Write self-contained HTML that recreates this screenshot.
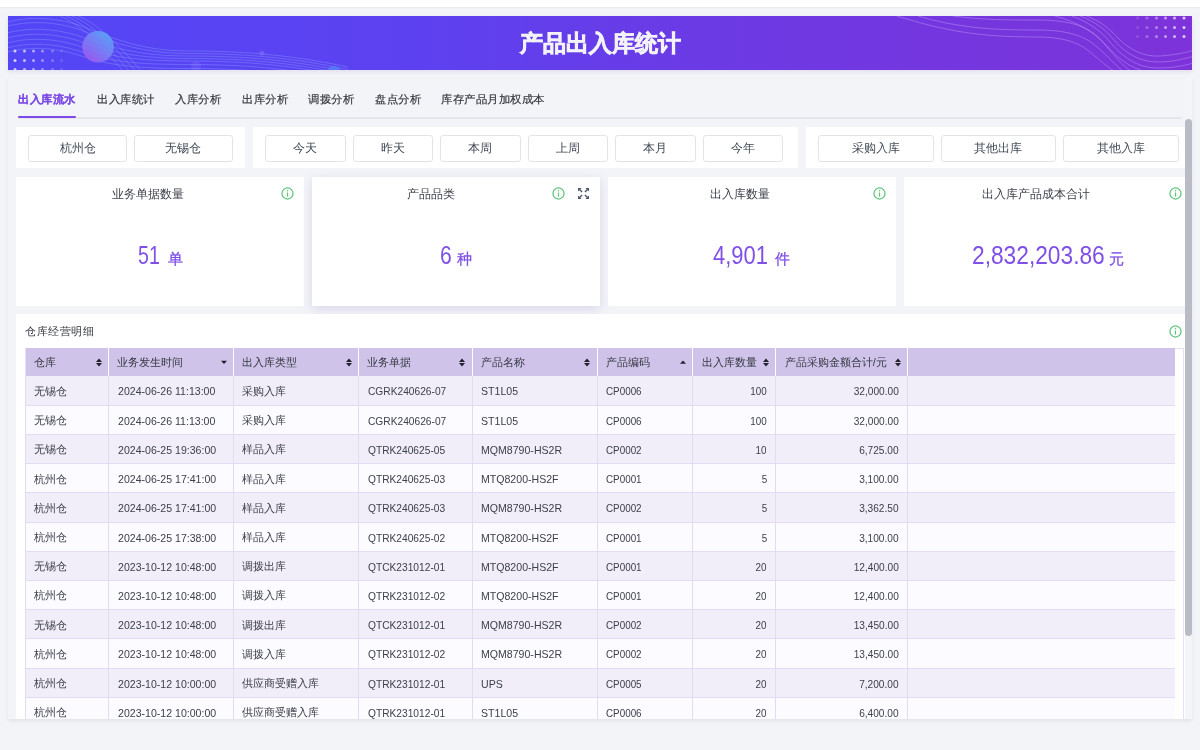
<!DOCTYPE html>
<html><head><meta charset="utf-8">
<style>
*{box-sizing:border-box;margin:0;padding:0}
html,body{width:1200px;height:750px;overflow:hidden}
body{background:#f3f4f8;font-family:"Liberation Sans",sans-serif;position:relative;color:#333}
#root{position:absolute;left:0;top:0;width:1200px;height:750px;will-change:transform}
.abs{position:absolute}
#topbar{left:0;top:0;width:1200px;height:6.7px;background:#fff;box-shadow:0 1px 1.5px rgba(0,0,0,0.045)}
#banner{left:8px;top:16px;width:1184px;height:54px;background:linear-gradient(90deg,#5346f6 0%,#5d41f0 35%,#6c3ae4 60%,#7d33d9 100%);overflow:hidden;box-shadow:0 2px 4px rgba(80,50,160,0.10)}
#banner .title{position:absolute;left:0;top:-0.3px;width:100%;height:54px;line-height:54px;text-align:center;color:#f2f2f7;font-size:23px;font-weight:bold;letter-spacing:0px;-webkit-text-stroke:0.7px #f2f2f7}
#container{left:8px;top:78px;width:1184px;height:640.7px;background:#f3f4f8;box-shadow:0 1.5px 4px rgba(0,0,0,0.07);overflow:hidden}
.tab{position:absolute;top:93.8px;font-size:12px;letter-spacing:0px;line-height:12px;transform:scale(0.962,0.93);transform-origin:0 0;color:#34373e;white-space:nowrap;-webkit-text-stroke:0.2px #34373e}
.tab.active{color:#7b4ae5;font-weight:bold;-webkit-text-stroke:0.1px #7b4ae5}
#tabline{left:18px;top:117px;width:1164px;height:2px;background:#e5e6eb}
#tabul{left:18px;top:115.8px;width:58px;height:2px;background:#7d4ae8;border-radius:1px}
.box{position:absolute;top:126.5px;height:41.5px;background:#fff}
.btn{position:absolute;top:135.2px;height:26.4px;border:1px solid #e4e4e8;border-radius:3px;background:#fff;font-size:12px;line-height:25.8px;text-align:center;color:#404854}
.card{position:absolute;top:176.7px;height:129.2px;width:288px;background:#fff}
.card .ct{position:absolute;top:11.5px;left:0;font-size:12px;line-height:12px;color:#3a3e47;text-align:center}
.num{position:absolute;top:0;color:#7f50e7;font-size:25.1px;line-height:25px;white-space:nowrap;transform-origin:0 0}
.unit{position:absolute;top:0;color:#7f50e7;font-size:15px;-webkit-text-stroke:0.3px #7f50e7;line-height:15px;white-space:nowrap}
#track{left:1184.5px;top:78px;width:7.5px;height:640.7px;background:#f4f5f8}
#scroll{left:1184.5px;top:118.7px;width:7.5px;height:517.3px;background:#b9bcc4;border-radius:4px}
#tclip{left:8px;top:78px;width:1184px;height:640.7px;overflow:hidden}
#tcard{left:8px;top:236.3px;width:1176px;height:420px;background:#fff}
#tcard .tt{position:absolute;left:9px;top:10.6px;font-size:11px;letter-spacing:0.6px;line-height:12px;color:#33363d}
#twrap{left:17px;top:269.7px;width:1159px;height:400px;border:1px solid #e6dff5}
#tbl{left:17px;top:270px;border-collapse:collapse;table-layout:fixed;width:1150px;font-size:11px;color:#3d414a}
th{background:#cfc3e9;height:28px;font-weight:normal;text-align:left;padding:1px 9px 0 8.2px;color:#353842;border-right:1.5px solid #fff;position:relative;white-space:nowrap}
td{height:29.22px;padding:1.6px 9px 0 8.2px;border-right:1px solid #e3daf4;border-bottom:1px solid #e3daf4;white-space:nowrap;overflow:hidden}
td.l{font-size:11.2px;padding-left:8.3px}
.t{display:inline-block;transform-origin:0 50%}
td.r .t{transform-origin:100% 50%}
td:first-child{border-left:1px solid #e3daf4}
td:last-child{border-right:none}
th:last-child{border-right:none}
tr.s td{background:#f1edf9}
tr.w td{background:#fcfbff}
td.r{text-align:right;padding-right:8.7px}
.sort{position:absolute;right:6.5px;top:9.5px;width:6px;height:9px}
</style></head><body>
<div id="root"><div id="topbar" class="abs"></div>
<div id="banner" class="abs">
<svg width="1184" height="54" style="position:absolute;left:0;top:0" viewBox="0 0 1184 54">
<defs><linearGradient id="ball" x1="0.85" y1="0.1" x2="0.2" y2="0.9"><stop offset="0" stop-color="#58a8f8"/><stop offset="1" stop-color="#9d5cf0"/></linearGradient>
<linearGradient id="semi" x1="0" y1="0" x2="0" y2="1"><stop offset="0" stop-color="#4f8cf5"/><stop offset="1" stop-color="#5a60f0"/></linearGradient></defs>

<g fill="none" stroke="#8ea2ff" stroke-opacity="0.42" stroke-width="0.9">
<path d="M0 5.8 C20 0.8 45 0.8 70 8.8 C100 19.8 130 35 180 35 C230 35 280 38 340 51"/>
<path d="M0 10 C20 5.0 45 5.0 70 13.0 C100 24.0 130 37.5 180 37.5 C230 37.5 280 40.5 340 53.5"/>
<path d="M0 16.7 C20 11.7 45 11.7 70 19.7 C100 30.7 130 40 180 40 C230 40 280 43 340 56"/>
<path d="M0 21.7 C20 16.7 45 16.7 70 24.7 C100 35.7 130 42.5 180 42.5 C230 42.5 280 45.5 340 58.5"/>
<path d="M0 26.7 C20 21.7 45 21.7 70 29.7 C100 40.7 130 45 180 45 C230 45 280 48 340 61"/>
<path d="M0 31.7 C20 26.7 45 26.7 70 34.7 C100 45.7 130 48.5 180 48.5 C230 48.5 280 51.5 340 64.5"/>
<path d="M0 35.8 C20 30.8 45 30.8 70 38.8 C100 49.8 130 52.5 180 52.5 C230 52.5 280 55.5 340 68.5"/>
<path d="M52 0 C72 8 92 28 116 56"/>
<path d="M58 0 C78 8 98 28 122 56"/>
<path d="M64 0 C84 8 104 28 128 56"/>
<path d="M70 0 C90 8 110 28 134 56"/>
</g>
<g fill="none" stroke="#c8a8ff" stroke-opacity="0.45" stroke-width="0.9">
<path d="M889 0 C940 16 975 21 1028 21 C1055 21 1070 26 1082 36 C1092 44 1100 52 1108 56"/>
<path d="M910 0 C950 12 985 14 1028 14 C1058 14 1075 19 1088 30 C1100 40 1108 50 1116 56"/>
<path d="M945 0 C975 4 1000 4 1028 4 C1062 4 1080 10 1093 24 C1104 36 1112 48 1124 56"/>
<path d="M1046.7 0 C1070 6 1085 16 1097 28 C1108 40 1120 52 1140 56"/>
<path d="M1064 0 C1080 6 1092 14 1102 26 C1114 40 1128 52 1150 52 C1165 52 1175 50 1186 46.8"/>
<path d="M1072 0 C1088 6 1098 14 1106 24 C1118 38 1132 46 1150 46 C1165 46 1175 43 1186 40.2"/>
<path d="M1078.7 0 C1094 6 1103 14 1111 23 C1122 34 1136 41 1152 40 C1166 39 1176 37 1186 34.2"/>
</g>
<circle cx="90" cy="30.8" r="15.8" fill="url(#ball)" opacity="0.9"/>
<circle cx="188" cy="50" r="5" fill="#ffffff" opacity="0.08"/>
<circle cx="254" cy="37" r="2.6" fill="#ffffff" opacity="0.12"/>
<circle cx="326" cy="58" r="8" fill="url(#semi)" opacity="0.7"/>
<g fill="#ffffff">
<circle cx="7" cy="35" r="1.5" opacity="0.75"/><circle cx="16.5" cy="35" r="1.5" opacity="0.65"/><circle cx="25.5" cy="35" r="1.5" opacity="0.55"/><circle cx="34.5" cy="35" r="1.5" opacity="0.42"/><circle cx="44.5" cy="35" r="1.5" opacity="0.28"/><circle cx="53.5" cy="35" r="1.5" opacity="0.14"/><circle cx="7" cy="44.5" r="1.5" opacity="0.75"/><circle cx="16.5" cy="44.5" r="1.5" opacity="0.65"/><circle cx="25.5" cy="44.5" r="1.5" opacity="0.55"/><circle cx="34.5" cy="44.5" r="1.5" opacity="0.42"/><circle cx="44.5" cy="44.5" r="1.5" opacity="0.28"/><circle cx="53.5" cy="44.5" r="1.5" opacity="0.14"/><circle cx="7" cy="53.5" r="1.5" opacity="0.75"/><circle cx="16.5" cy="53.5" r="1.5" opacity="0.65"/><circle cx="25.5" cy="53.5" r="1.5" opacity="0.55"/><circle cx="34.5" cy="53.5" r="1.5" opacity="0.42"/><circle cx="44.5" cy="53.5" r="1.5" opacity="0.28"/><circle cx="53.5" cy="53.5" r="1.5" opacity="0.14"/>
<circle cx="1129.5" cy="2" r="1.5" opacity="0.14"/><circle cx="1139" cy="2" r="1.5" opacity="0.28"/><circle cx="1148.5" cy="2" r="1.5" opacity="0.42"/><circle cx="1157.5" cy="2" r="1.5" opacity="0.55"/><circle cx="1166.5" cy="2" r="1.5" opacity="0.65"/><circle cx="1176" cy="2" r="1.5" opacity="0.75"/><circle cx="1129.5" cy="11.5" r="1.5" opacity="0.14"/><circle cx="1139" cy="11.5" r="1.5" opacity="0.28"/><circle cx="1148.5" cy="11.5" r="1.5" opacity="0.42"/><circle cx="1157.5" cy="11.5" r="1.5" opacity="0.55"/><circle cx="1166.5" cy="11.5" r="1.5" opacity="0.65"/><circle cx="1176" cy="11.5" r="1.5" opacity="0.75"/><circle cx="1129.5" cy="20.5" r="1.5" opacity="0.14"/><circle cx="1139" cy="20.5" r="1.5" opacity="0.28"/><circle cx="1148.5" cy="20.5" r="1.5" opacity="0.42"/><circle cx="1157.5" cy="20.5" r="1.5" opacity="0.55"/><circle cx="1166.5" cy="20.5" r="1.5" opacity="0.65"/><circle cx="1176" cy="20.5" r="1.5" opacity="0.75"/>
</g>
</svg>
<div class="title">产品出入库统计</div>
</div>

<div id="container" class="abs"></div>
<div class="tab active" style="left:18px">出入库流水</div>
<div class="tab" style="left:97px">出入库统计</div>
<div class="tab" style="left:175px">入库分析</div>
<div class="tab" style="left:241.5px">出库分析</div>
<div class="tab" style="left:308px">调拨分析</div>
<div class="tab" style="left:375px">盘点分析</div>
<div class="tab" style="left:441px">库存产品月加权成本</div>
<div id="tabline" class="abs"></div><div id="tabul" class="abs"></div>
<div class="box" style="left:16px;width:229px"></div>
<div class="box" style="left:253px;width:545px"></div>
<div class="box" style="left:806px;width:386px"></div>
<div class="btn" style="left:28px;width:99px">杭州仓</div>
<div class="btn" style="left:134px;width:98.5px">无锡仓</div>
<div class="btn" style="left:265px;width:80.5px">今天</div>
<div class="btn" style="left:352.5px;width:80.5px">昨天</div>
<div class="btn" style="left:440px;width:80.5px">本周</div>
<div class="btn" style="left:527.5px;width:80.5px">上周</div>
<div class="btn" style="left:615px;width:80.5px">本月</div>
<div class="btn" style="left:702.5px;width:80.5px">今年</div>
<div class="btn" style="left:818px;width:115.5px">采购入库</div>
<div class="btn" style="left:940.5px;width:115.5px">其他出库</div>
<div class="btn" style="left:1063px;width:115.5px">其他入库</div>
<div class="card" style="left:16px"><div class="ct" style="width:264px">业务单据数量</div></div>
<div class="card" style="left:312px;box-shadow:0 3px 10px rgba(90,70,160,0.16)"><div class="ct" style="width:238px">产品品类</div></div>
<div class="card" style="left:608px"><div class="ct" style="width:264px">出入库数量</div></div>
<div class="card" style="left:904px"><div class="ct" style="width:264px">出入库产品成本合计</div></div>
<div class="num" style="left:137.75px;top:243px;transform:scaleX(0.78)">51</div>
<div class="num" style="left:439.9px;top:243px;transform:scaleX(0.84)">6</div>
<div class="num" style="left:712.5px;top:243px;transform:scaleX(0.876)">4,901</div>
<div class="num" style="left:971.7px;top:243px;transform:scaleX(0.906)">2,832,203.86</div>
<div class="unit" style="left:167.75px;top:250.5px">单</div>
<div class="unit" style="left:457.3px;top:250.5px">种</div>
<div class="unit" style="left:775.3px;top:250.5px">件</div>
<div class="unit" style="left:1109.3px;top:250.5px">元</div>
<svg class="abs" style="left:280.7px;top:186.9px" width="13" height="13" viewBox="0 0 13 13"><circle cx="6.5" cy="6.5" r="5.55" fill="none" stroke="#5cc47c" stroke-width="1.25"/><circle cx="6.5" cy="3.75" r="0.8" fill="#5cc47c"/><rect x="5.9" y="5.5" width="1.2" height="4.1" fill="#5cc47c"/></svg>
<svg class="abs" style="left:551.8px;top:186.9px" width="13" height="13" viewBox="0 0 13 13"><circle cx="6.5" cy="6.5" r="5.55" fill="none" stroke="#5cc47c" stroke-width="1.25"/><circle cx="6.5" cy="3.75" r="0.8" fill="#5cc47c"/><rect x="5.9" y="5.5" width="1.2" height="4.1" fill="#5cc47c"/></svg>
<svg class="abs" style="left:872.7px;top:186.9px" width="13" height="13" viewBox="0 0 13 13"><circle cx="6.5" cy="6.5" r="5.55" fill="none" stroke="#5cc47c" stroke-width="1.25"/><circle cx="6.5" cy="3.75" r="0.8" fill="#5cc47c"/><rect x="5.9" y="5.5" width="1.2" height="4.1" fill="#5cc47c"/></svg>
<svg class="abs" style="left:1168.7px;top:186.9px" width="13" height="13" viewBox="0 0 13 13"><circle cx="6.5" cy="6.5" r="5.55" fill="none" stroke="#5cc47c" stroke-width="1.25"/><circle cx="6.5" cy="3.75" r="0.8" fill="#5cc47c"/><rect x="5.9" y="5.5" width="1.2" height="4.1" fill="#5cc47c"/></svg>
<svg class="abs" style="left:577.9px;top:188.0px" width="11" height="11" viewBox="0 0 11 11"><g fill="#50566a"><path d="M0 0H3.6L0 3.6Z"/><path d="M11 0H7.4L11 3.6Z"/><path d="M0 11H3.6L0 7.4Z"/><path d="M11 11H7.4L11 7.4Z"/></g><g stroke="#50566a" stroke-width="1.35"><path d="M1.3 1.3L4.1 4.1M9.7 1.3L6.9 4.1M1.3 9.7L4.1 6.9M9.7 9.7L6.9 6.9"/></g></svg>
<div id="tclip" class="abs">
<div id="tcard" class="abs"><div class="tt">仓库经营明细</div></div>
<div id="twrap" class="abs"></div>
<table id="tbl" class="abs"><colgroup>
<col style="width:83.25px">
<col style="width:125.0px">
<col style="width:125.05px">
<col style="width:113.4px">
<col style="width:125.0px">
<col style="width:95.8px">
<col style="width:83.0px">
<col style="width:131.7px">
<col style="width:267.8px">
</colgroup><thead><tr>
<th>仓库<svg class="sort" viewBox="0 0 6 9"><path d="M0 3.9 L3 0.4 L6 3.9Z M0 5.1 L3 8.6 L6 5.1Z" fill="#22222e"/></svg></th>
<th>业务发生时间<svg class="sort" viewBox="0 0 6 9"><path d="M0 2.7 L3 6 L6 2.7Z" fill="#22222e"/></svg></th>
<th>出入库类型<svg class="sort" viewBox="0 0 6 9"><path d="M0 3.9 L3 0.4 L6 3.9Z M0 5.1 L3 8.6 L6 5.1Z" fill="#22222e"/></svg></th>
<th>业务单据<svg class="sort" viewBox="0 0 6 9"><path d="M0 3.9 L3 0.4 L6 3.9Z M0 5.1 L3 8.6 L6 5.1Z" fill="#22222e"/></svg></th>
<th>产品名称<svg class="sort" viewBox="0 0 6 9"><path d="M0 3.9 L3 0.4 L6 3.9Z M0 5.1 L3 8.6 L6 5.1Z" fill="#22222e"/></svg></th>
<th>产品编码<svg class="sort" viewBox="0 0 6 9"><path d="M0 5.7 L3 2.4 L6 5.7Z" fill="#22222e"/></svg></th>
<th>出入库数量<svg class="sort" viewBox="0 0 6 9"><path d="M0 3.9 L3 0.4 L6 3.9Z M0 5.1 L3 8.6 L6 5.1Z" fill="#22222e"/></svg></th>
<th>产品采购金额合计/元<svg class="sort" viewBox="0 0 6 9"><path d="M0 3.9 L3 0.4 L6 3.9Z M0 5.1 L3 8.6 L6 5.1Z" fill="#22222e"/></svg></th>
<th></th>
</tr></thead><tbody>
<tr class="s"><td>无锡仓</td><td class="l"><span class="t" style="transform:scaleX(0.945)">2024-06-26 11:13:00</span></td><td>采购入库</td><td class="l"><span class="t" style="transform:scaleX(0.912)">CGRK240626-07</span></td><td class="l"><span class="t" style="transform:scaleX(0.945)">ST1L05</span></td><td class="l"><span class="t" style="transform:scaleX(0.88)">CP0006</span></td><td class="l r"><span class="t" style="transform:scaleX(0.88)">100</span></td><td class="l r"><span class="t" style="transform:scaleX(0.905)">32,000.00</span></td><td></td></tr>
<tr class="w"><td>无锡仓</td><td class="l"><span class="t" style="transform:scaleX(0.945)">2024-06-26 11:13:00</span></td><td>采购入库</td><td class="l"><span class="t" style="transform:scaleX(0.912)">CGRK240626-07</span></td><td class="l"><span class="t" style="transform:scaleX(0.945)">ST1L05</span></td><td class="l"><span class="t" style="transform:scaleX(0.88)">CP0006</span></td><td class="l r"><span class="t" style="transform:scaleX(0.88)">100</span></td><td class="l r"><span class="t" style="transform:scaleX(0.905)">32,000.00</span></td><td></td></tr>
<tr class="s"><td>无锡仓</td><td class="l"><span class="t" style="transform:scaleX(0.945)">2024-06-25 19:36:00</span></td><td>样品入库</td><td class="l"><span class="t" style="transform:scaleX(0.912)">QTRK240625-05</span></td><td class="l"><span class="t" style="transform:scaleX(0.945)">MQM8790-HS2R</span></td><td class="l"><span class="t" style="transform:scaleX(0.88)">CP0002</span></td><td class="l r"><span class="t" style="transform:scaleX(0.88)">10</span></td><td class="l r"><span class="t" style="transform:scaleX(0.905)">6,725.00</span></td><td></td></tr>
<tr class="w"><td>杭州仓</td><td class="l"><span class="t" style="transform:scaleX(0.945)">2024-06-25 17:41:00</span></td><td>样品入库</td><td class="l"><span class="t" style="transform:scaleX(0.912)">QTRK240625-03</span></td><td class="l"><span class="t" style="transform:scaleX(0.945)">MTQ8200-HS2F</span></td><td class="l"><span class="t" style="transform:scaleX(0.88)">CP0001</span></td><td class="l r"><span class="t" style="transform:scaleX(0.88)">5</span></td><td class="l r"><span class="t" style="transform:scaleX(0.905)">3,100.00</span></td><td></td></tr>
<tr class="s"><td>杭州仓</td><td class="l"><span class="t" style="transform:scaleX(0.945)">2024-06-25 17:41:00</span></td><td>样品入库</td><td class="l"><span class="t" style="transform:scaleX(0.912)">QTRK240625-03</span></td><td class="l"><span class="t" style="transform:scaleX(0.945)">MQM8790-HS2R</span></td><td class="l"><span class="t" style="transform:scaleX(0.88)">CP0002</span></td><td class="l r"><span class="t" style="transform:scaleX(0.88)">5</span></td><td class="l r"><span class="t" style="transform:scaleX(0.905)">3,362.50</span></td><td></td></tr>
<tr class="w"><td>杭州仓</td><td class="l"><span class="t" style="transform:scaleX(0.945)">2024-06-25 17:38:00</span></td><td>样品入库</td><td class="l"><span class="t" style="transform:scaleX(0.912)">QTRK240625-02</span></td><td class="l"><span class="t" style="transform:scaleX(0.945)">MTQ8200-HS2F</span></td><td class="l"><span class="t" style="transform:scaleX(0.88)">CP0001</span></td><td class="l r"><span class="t" style="transform:scaleX(0.88)">5</span></td><td class="l r"><span class="t" style="transform:scaleX(0.905)">3,100.00</span></td><td></td></tr>
<tr class="s"><td>无锡仓</td><td class="l"><span class="t" style="transform:scaleX(0.945)">2023-10-12 10:48:00</span></td><td>调拨出库</td><td class="l"><span class="t" style="transform:scaleX(0.912)">QTCK231012-01</span></td><td class="l"><span class="t" style="transform:scaleX(0.945)">MTQ8200-HS2F</span></td><td class="l"><span class="t" style="transform:scaleX(0.88)">CP0001</span></td><td class="l r"><span class="t" style="transform:scaleX(0.88)">20</span></td><td class="l r"><span class="t" style="transform:scaleX(0.905)">12,400.00</span></td><td></td></tr>
<tr class="w"><td>杭州仓</td><td class="l"><span class="t" style="transform:scaleX(0.945)">2023-10-12 10:48:00</span></td><td>调拨入库</td><td class="l"><span class="t" style="transform:scaleX(0.912)">QTRK231012-02</span></td><td class="l"><span class="t" style="transform:scaleX(0.945)">MTQ8200-HS2F</span></td><td class="l"><span class="t" style="transform:scaleX(0.88)">CP0001</span></td><td class="l r"><span class="t" style="transform:scaleX(0.88)">20</span></td><td class="l r"><span class="t" style="transform:scaleX(0.905)">12,400.00</span></td><td></td></tr>
<tr class="s"><td>无锡仓</td><td class="l"><span class="t" style="transform:scaleX(0.945)">2023-10-12 10:48:00</span></td><td>调拨出库</td><td class="l"><span class="t" style="transform:scaleX(0.912)">QTCK231012-01</span></td><td class="l"><span class="t" style="transform:scaleX(0.945)">MQM8790-HS2R</span></td><td class="l"><span class="t" style="transform:scaleX(0.88)">CP0002</span></td><td class="l r"><span class="t" style="transform:scaleX(0.88)">20</span></td><td class="l r"><span class="t" style="transform:scaleX(0.905)">13,450.00</span></td><td></td></tr>
<tr class="w"><td>杭州仓</td><td class="l"><span class="t" style="transform:scaleX(0.945)">2023-10-12 10:48:00</span></td><td>调拨入库</td><td class="l"><span class="t" style="transform:scaleX(0.912)">QTRK231012-02</span></td><td class="l"><span class="t" style="transform:scaleX(0.945)">MQM8790-HS2R</span></td><td class="l"><span class="t" style="transform:scaleX(0.88)">CP0002</span></td><td class="l r"><span class="t" style="transform:scaleX(0.88)">20</span></td><td class="l r"><span class="t" style="transform:scaleX(0.905)">13,450.00</span></td><td></td></tr>
<tr class="s"><td>杭州仓</td><td class="l"><span class="t" style="transform:scaleX(0.945)">2023-10-12 10:00:00</span></td><td>供应商受赠入库</td><td class="l"><span class="t" style="transform:scaleX(0.912)">QTRK231012-01</span></td><td class="l"><span class="t" style="transform:scaleX(0.945)">UPS</span></td><td class="l"><span class="t" style="transform:scaleX(0.88)">CP0005</span></td><td class="l r"><span class="t" style="transform:scaleX(0.88)">20</span></td><td class="l r"><span class="t" style="transform:scaleX(0.905)">7,200.00</span></td><td></td></tr>
<tr class="w"><td>杭州仓</td><td class="l"><span class="t" style="transform:scaleX(0.945)">2023-10-12 10:00:00</span></td><td>供应商受赠入库</td><td class="l"><span class="t" style="transform:scaleX(0.912)">QTRK231012-01</span></td><td class="l"><span class="t" style="transform:scaleX(0.945)">ST1L05</span></td><td class="l"><span class="t" style="transform:scaleX(0.88)">CP0006</span></td><td class="l r"><span class="t" style="transform:scaleX(0.88)">20</span></td><td class="l r"><span class="t" style="transform:scaleX(0.905)">6,400.00</span></td><td></td></tr>
</tbody></table></div>
<svg class="abs" style="left:1168.8px;top:324.5px" width="13" height="13" viewBox="0 0 13 13"><circle cx="6.5" cy="6.5" r="5.55" fill="none" stroke="#5cc47c" stroke-width="1.25"/><circle cx="6.5" cy="3.75" r="0.8" fill="#5cc47c"/><rect x="5.9" y="5.5" width="1.2" height="4.1" fill="#5cc47c"/></svg>
<div id="track" class="abs"></div><div id="scroll" class="abs"></div>
</div></body></html>
